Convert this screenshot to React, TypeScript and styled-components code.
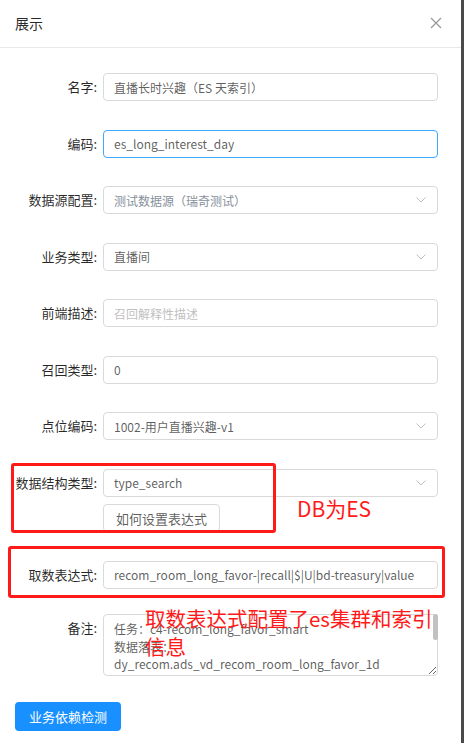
import React from 'react';
import styled, { createGlobalStyle } from 'styled-components';

const GlobalStyle = createGlobalStyle`
  html, body { margin: 0; padding: 0; background: #4a4a4a; }
  body { font-family: "Noto Sans CJK SC", "Noto Sans", sans-serif; }
  * { box-sizing: border-box; }
`;

const Page = styled.div`
  display: flex;
  width: 464px;
  height: 743px;
  overflow: hidden;
`;

const Modal = styled.div`
  width: 461px;
  height: 743px;
  background: #fff;
  display: flex;
  flex-direction: column;
`;

const Header = styled.div`
  height: 48px;
  flex: none;
  display: flex;
  align-items: center;
  justify-content: space-between;
  padding: 0 14px 0 15px;
  border-bottom: 1px solid #e8e8e8;
`;

const Title = styled.div`
  font-size: 14px;
  color: rgba(0, 0, 0, 0.85);
  margin-top: -2px;
`;

const Close = styled.button`
  width: 22px;
  height: 22px;
  border: 0;
  background: none;
  padding: 0;
  display: flex;
  align-items: center;
  justify-content: center;
  margin-top: -1px;
`;

const Body = styled.div`
  position: relative;
  padding: 25px 23px 0 0;
`;

const Row = styled.div<{ $mb?: number }>`
  display: flex;
  align-items: flex-start;
  margin-bottom: ${p => (p.$mb ?? 28.5)}px;
`;

const Label = styled.div`
  width: 97px;
  flex: none;
  height: 28px;
  line-height: 28px;
  text-align: right;
  font-size: 13px;
  color: rgba(0, 0, 0, 0.85);
  white-space: nowrap;
`;

const Control = styled.div`
  flex: 1;
  margin-left: 6px;
  display: flex;
  flex-direction: column;
  align-items: flex-start;
`;

const Field = styled.div<{ $focus?: boolean }>`
  width: 100%;
  height: 28px;
  border: 1px solid ${p => (p.$focus ? '#40a9ff' : '#d9d9d9')};
  border-radius: 4px;
  display: flex;
  align-items: center;
  justify-content: space-between;
  padding: 0 10px 0 10px;
  background: #fff;
`;

const Value = styled.span<{ $tone?: 'text' | 'muted' | 'placeholder' }>`
  font-size: 12px;
  white-space: nowrap;
  color: ${p =>
    p.$tone === 'placeholder' ? '#bfbfbf' : p.$tone === 'muted' ? '#86909b' : 'rgba(0, 0, 0, 0.65)'};
`;

const Ghost = styled.button`
  margin-top: 7.5px;
  height: 28px;
  padding: 0 12px;
  border: 1px solid #d9d9d9;
  border-radius: 4px;
  background: #fff;
  font-family: inherit;
  font-size: 13px;
  color: rgba(0, 0, 0, 0.65);
`;

const AreaWrap = styled.div`
  position: relative;
  width: 100%;
`;

const Area = styled.textarea`
  display: block;
  width: 100%;
  height: 62px;
  border: 1px solid #d9d9d9;
  border-radius: 4px;
  padding: 5px 10px 4px 10px;
  font-family: inherit;
  font-size: 12px;
  line-height: 17.5px;
  color: rgba(0, 0, 0, 0.65);
  overflow-y: hidden;
  resize: vertical;
  outline: none;
`;

const Thumb = styled.div`
  position: absolute;
  top: 0;
  right: 0;
  width: 5px;
  height: 26px;
  border-radius: 3px;
  background: #c1c1c1;
`;

const Primary = styled.button`
  margin-left: 15px;
  margin-top: 26px;
  height: 29px;
  padding: 0 14px;
  border: 0;
  border-radius: 4px;
  background: #1890ff;
  color: #fff;
  font-family: inherit;
  font-size: 13px;
`;

const Mark = styled.div`
  position: absolute;
  border: 3px solid #ff1a1a;
  border-radius: 3px;
  pointer-events: none;
`;

const Note = styled.div<{ $size?: number }>`
  position: absolute;
  color: #ff1a1a;
  font-size: ${p => p.$size ?? 21}px;
  line-height: 28px;
  white-space: nowrap;
  pointer-events: none;
`;

const Chevron = () => (
  <svg width="12" height="8" viewBox="0 0 12 8">
    <path d="M1.5 1.5 L6 6 L10.5 1.5" fill="none" stroke="#bfbfbf" strokeWidth="1" />
  </svg>
);

const rows: { label: string; value: string; tone?: 'text' | 'muted' | 'placeholder'; select?: boolean; focus?: boolean }[] = [
  { label: '名字:', value: '直播长时兴趣（ES 天索引）' },
  { label: '编码:', value: 'es_long_interest_day', focus: true },
  { label: '数据源配置:', value: '测试数据源（瑞奇测试）', tone: 'muted', select: true },
  { label: '业务类型:', value: '直播间', select: true },
  { label: '前端描述:', value: '召回解释性描述', tone: 'placeholder' },
  { label: '召回类型:', value: '0' },
  { label: '点位编码:', value: '1002-用户直播兴趣-v1', select: true },
];

export default function App() {
  return (
    <Page>
      <GlobalStyle />
      <Modal>
        <Header>
          <Title>展示</Title>
          <Close aria-label="close">
            <svg width="12" height="12" viewBox="0 0 12 12">
              <path d="M1 1 L11 11 M11 1 L1 11" stroke="#999" strokeWidth="1.3" />
            </svg>
          </Close>
        </Header>
        <Body>
          {rows.map(r => (
            <Row key={r.label}>
              <Label>{r.label}</Label>
              <Control>
                <Field $focus={r.focus}>
                  <Value $tone={r.tone}>{r.value}</Value>
                  {r.select && <Chevron />}
                </Field>
              </Control>
            </Row>
          ))}
          <Row>
            <Label>数据结构类型:</Label>
            <Control>
              <Field>
                <Value>type_search</Value>
                <Chevron />
              </Field>
              <Ghost>如何设置表达式</Ghost>
            </Control>
          </Row>
          <Row $mb={25.5}>
            <Label>取数表达式:</Label>
            <Control>
              <Field>
                <Value>recom_room_long_favor-|recall|$|U|bd-treasury|value</Value>
              </Field>
            </Control>
          </Row>
          <Row $mb={0}>
            <Label>备注:</Label>
            <Control>
              <AreaWrap>
                <Area
                  readOnly
                  defaultValue={'任务：c4-recom_long_favor_smart\n数据落表：\ndy_recom.ads_vd_recom_room_long_favor_1d\n调度：每天\n负责人：\n备注：ES 天索引\n'}
                />
                <Thumb />
              </AreaWrap>
            </Control>
          </Row>
          <Primary>业务依赖检测</Primary>

          <Mark style={{ left: 11, top: 415, width: 265, height: 70 }} />
          <Mark style={{ left: 8, top: 498, width: 437, height: 52 }} />
          <Note $size={21} style={{ left: 297, top: 446 }}>DB为ES</Note>
          <Note $size={20.5} style={{ left: 145, top: 556 }}>
            取数表达式配置了es集群和索引
            <br />
            信息
          </Note>
        </Body>
      </Modal>
    </Page>
  );
}
